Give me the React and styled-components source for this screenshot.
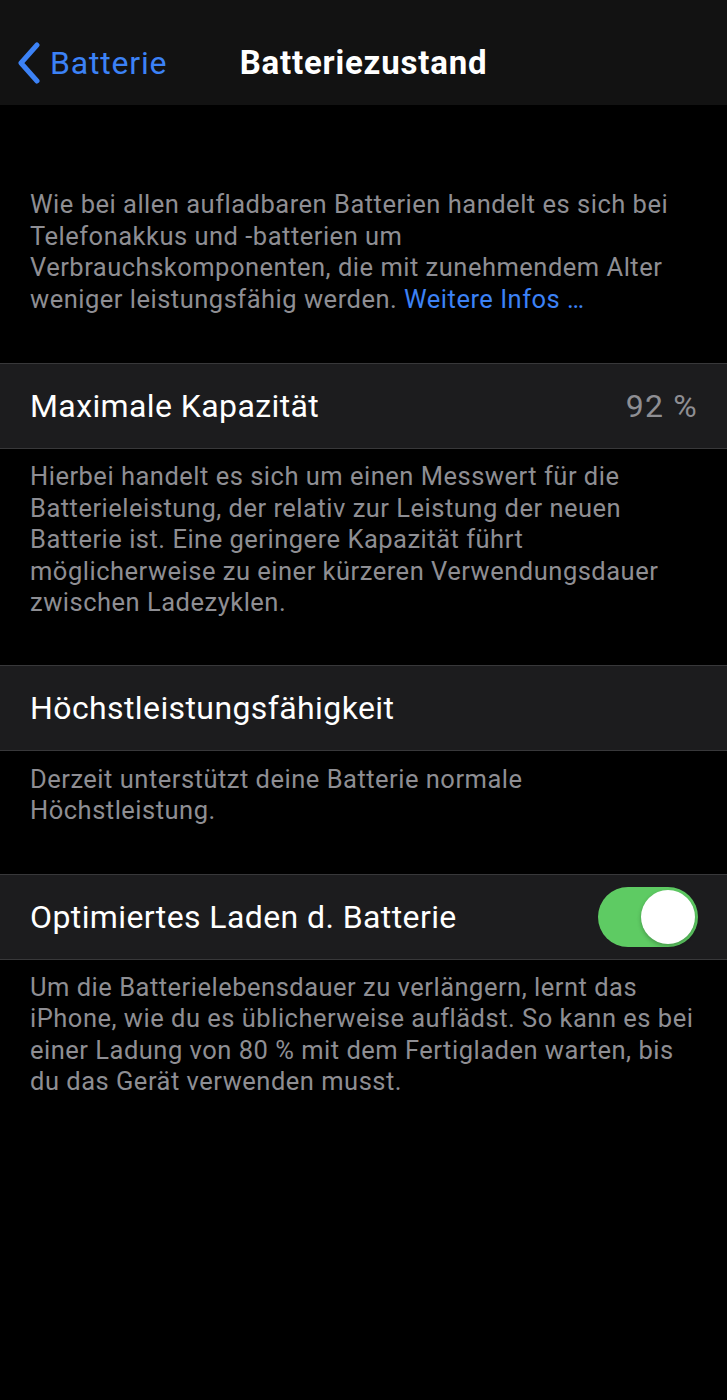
import React from 'react';
import styled, { createGlobalStyle } from 'styled-components';

const GlobalStyle = createGlobalStyle`
  html, body {
    margin: 0;
    padding: 0;
    background: #000;
  }
  body {
    font-family: Roboto, "Liberation Sans", sans-serif;
    -webkit-font-smoothing: antialiased;
  }
`;

const Screen = styled.div`
  width: 727px;
  min-height: 1400px;
  background: #000;
`;

const NavBar = styled.header`
  height: 105px;
  background: #121212;
  display: grid;
  grid-template-columns: 1fr auto 1fr;
  align-items: center;
  padding-top: 20px;
  box-sizing: border-box;
`;

const BackButton = styled.div`
  display: flex;
  align-items: center;
  gap: 9px;
  padding-left: 17px;
  color: #3c82f6;
  font-size: 32px;
  letter-spacing: 0.8px;
`;

const Title = styled.h1`
  margin: 0;
  color: #fff;
  font-size: 33px;
  font-weight: 700;
  letter-spacing: 0.8px;
`;

const Footer = styled.p`
  margin: 0;
  padding: ${(p) => p.$top || 12}px 30px 0;
  color: #8e8e93;
  font-size: 25.5px;
  letter-spacing: 0.5px;
  line-height: 31.5px;
  white-space: nowrap;
`;

const Link = styled.span`
  color: #3c82f6;
`;

const Cell = styled.div`
  height: 84px;
  background: #1c1c1e;
  border-top: 1px solid #38383a;
  border-bottom: 1px solid #38383a;
  display: flex;
  align-items: center;
  justify-content: space-between;
  padding: 0 29px 0 30px;
  margin-top: ${(p) => p.$top}px;
`;

const Label = styled.span`
  color: #fff;
  font-size: 32px;
  letter-spacing: 0.4px;
`;

const Value = styled.span`
  color: #8e8e93;
  font-size: 32px;
  letter-spacing: 1.2px;
`;

const Toggle = styled.div`
  width: 100px;
  height: 60px;
  border-radius: 30px;
  background: #5ecb63;
  display: flex;
  justify-content: flex-end;
  align-items: center;
  padding: 3px;
  box-sizing: border-box;
  &::after {
    content: '';
    width: 54px;
    height: 54px;
    border-radius: 50%;
    background: #fff;
    box-shadow: 0 2px 4px rgba(0, 0, 0, 0.25);
  }
`;

export default function App() {
  return (
    <Screen>
      <GlobalStyle />
      <NavBar>
        <BackButton>
          <svg width="24" height="42" viewBox="0 0 24 42">
            <path d="M20 3 L4 21 L20 39" fill="none" stroke="#3c82f6" strokeWidth="5" strokeLinecap="round" strokeLinejoin="round" />
          </svg>
          Batterie
        </BackButton>
        <Title>Batteriezustand</Title>
        <div />
      </NavBar>

      <Footer $top={84}>
        Wie bei allen aufladbaren Batterien handelt es sich bei
        <br />
        Telefonakkus und -batterien um
        <br />
        Verbrauchskomponenten, die mit zunehmendem Alter
        <br />
        weniger leistungsfähig werden. <Link>Weitere Infos …</Link>
      </Footer>

      <Cell $top={48}>
        <Label>Maximale Kapazität</Label>
        <Value>92 %</Value>
      </Cell>
      <Footer $top={12}>
        Hierbei handelt es sich um einen Messwert für die
        <br />
        Batterieleistung, der relativ zur Leistung der neuen
        <br />
        Batterie ist. Eine geringere Kapazität führt
        <br />
        möglicherweise zu einer kürzeren Verwendungsdauer
        <br />
        zwischen Ladezyklen.
      </Footer>

      <Cell $top={46}>
        <Label>Höchstleistungsfähigkeit</Label>
      </Cell>
      <Footer $top={13}>
        Derzeit unterstützt deine Batterie normale
        <br />
        Höchstleistung.
      </Footer>

      <Cell $top={47}>
        <Label>Optimiertes Laden d. Batterie</Label>
        <Toggle />
      </Cell>
      <Footer $top={12}>
        Um die Batterielebensdauer zu verlängern, lernt das
        <br />
        iPhone, wie du es üblicherweise auflädst. So kann es bei
        <br />
        einer Ladung von 80 % mit dem Fertigladen warten, bis
        <br />
        du das Gerät verwenden musst.
      </Footer>
    </Screen>
  );
}
